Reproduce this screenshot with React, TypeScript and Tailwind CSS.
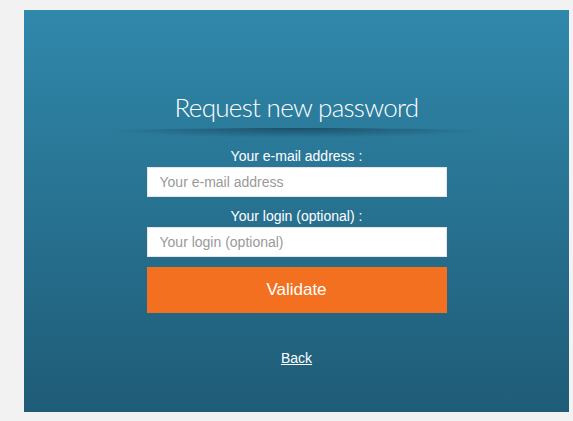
import React from "react";

export default function App() {
  return (
    <div className="w-[573px] h-[421px] bg-[#f2f2f2] pt-[10px] pl-[24px]" style={{ fontFamily: '"Liberation Sans", Arial, sans-serif' }}>
      <div className="w-[545px] h-[402px] bg-gradient-to-b from-[#3088ab] to-[#1f5c77] flex flex-col items-center">
        <div className="relative mt-[79px] w-[380px] flex justify-center">
          <h1 className="text-white text-[26px] leading-[36px] tracking-[-0.7px]" style={{ fontFamily: 'Lato, "Noto Sans", sans-serif', fontWeight: 300 }}>
            Request new password
          </h1>
          <div className="absolute left-[-10px] right-[-10px] top-[39px] h-[10px] rounded-[50%] bg-[radial-gradient(ellipse_at_center_top,rgba(20,50,70,0.6),rgba(20,50,70,0)_70%)]" />
        </div>
        <div className="mt-[23px] w-[300px] flex flex-col items-center">
          <label className="text-white text-[14px] leading-[16px]">Your e-mail address :</label>
          <input
            className="mt-[3px] w-[300px] h-[30px] bg-white border border-[#e6e6e6] px-[12px] text-[14px] text-[#555] placeholder:text-[#999] outline-none"
            placeholder="Your e-mail address"
          />
          <label className="mt-[11px] text-white text-[14px] leading-[16px]">Your login (optional) :</label>
          <input
            className="mt-[3px] w-[300px] h-[30px] bg-white border border-[#e6e6e6] px-[12px] text-[14px] text-[#555] placeholder:text-[#999] outline-none"
            placeholder="Your login (optional)"
          />
          <button className="mt-[10px] w-[300px] h-[46px] bg-[#f37021] text-white text-[17px]">Validate</button>
          <a href="#" className="mt-[37px] text-white text-[14px] leading-[16px] underline">Back</a>
        </div>
      </div>
    </div>
  );
}
